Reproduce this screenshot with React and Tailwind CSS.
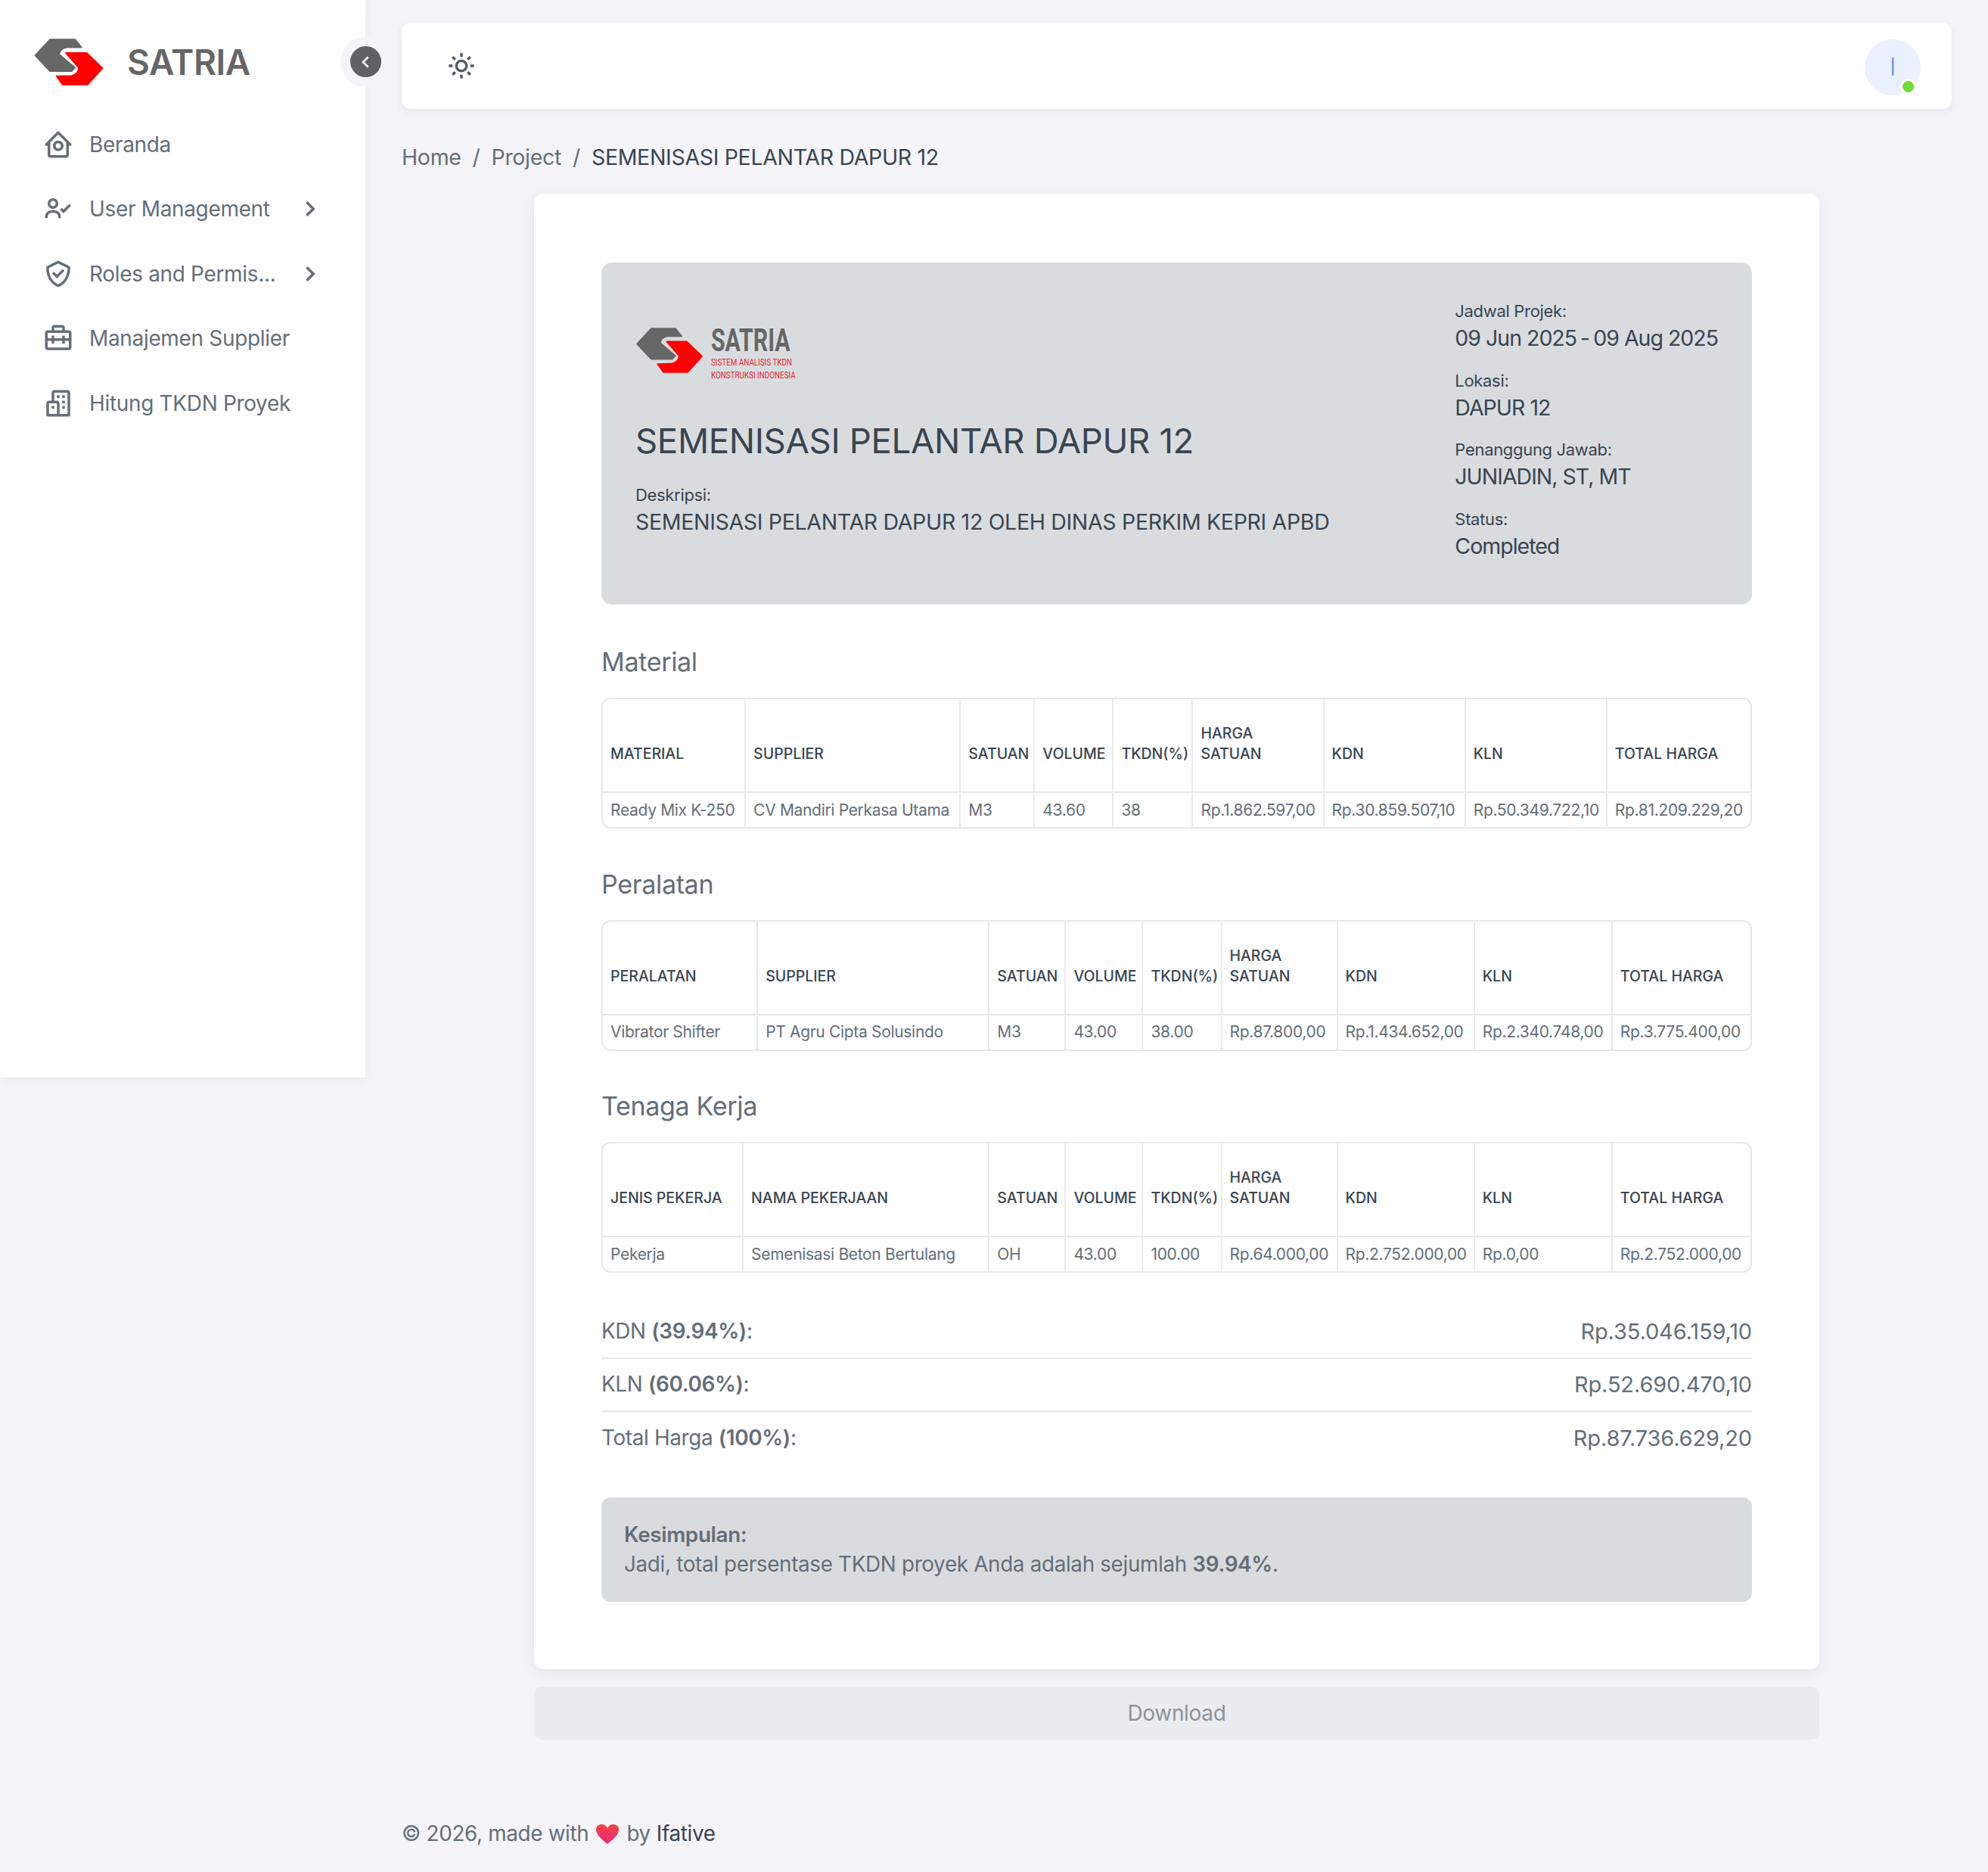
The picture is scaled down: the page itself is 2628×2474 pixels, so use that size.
import React from "react";
import {
  BiHomeCircle,
  BiUserCheck,
  BiCheckShield,
  BiBriefcaseAlt2,
  BiBuildings,
  BiChevronRight,
  BiChevronLeft,
  BiSun,
} from "react-icons/bi";

const NAV_ITEMS = [
  { label: "Beranda", icon: BiHomeCircle },
  { label: "User Management", icon: BiUserCheck, sub: true },
  { label: "Roles and Permis...", icon: BiCheckShield, sub: true },
  { label: "Manajemen Supplier", icon: BiBriefcaseAlt2 },
  { label: "Hitung TKDN Proyek", icon: BiBuildings },
];

const META = [
  { label: "Jadwal Projek:", value: <>09 Jun 2025<span className="mx-[5px]">-</span>09 Aug 2025</> },
  { label: "Lokasi:", value: "DAPUR 12" },
  { label: "Penanggung Jawab:", value: "JUNIADIN, ST, MT" },
  { label: "Status:", value: "Completed" },
];

const TABLES = [
  {
    title: "Material",
    widths: [188, 284, 98, 104, 105, 173, 187, 187, 190],
    first: "MATERIAL",
    second: "SUPPLIER",
    row: ["Ready Mix K-250", "CV Mandiri Perkasa Utama", "M3", "43.60", "38", "Rp.1.862.597,00", "Rp.30.859.507,10", "Rp.50.349.722,10", "Rp.81.209.229,20"],
  },
  {
    title: "Peralatan",
    widths: [204, 306, 101, 102, 104, 153, 181, 182, 183],
    first: "PERALATAN",
    second: "SUPPLIER",
    row: ["Vibrator Shifter", "PT Agru Cipta Solusindo", "M3", "43.00", "38.00", "Rp.87.800,00", "Rp.1.434.652,00", "Rp.2.340.748,00", "Rp.3.775.400,00"],
  },
  {
    title: "Tenaga Kerja",
    widths: [185, 325, 101, 102, 104, 153, 181, 182, 183],
    first: "JENIS PEKERJA",
    second: "NAMA PEKERJAAN",
    row: ["Pekerja", "Semenisasi Beton Bertulang", "OH", "43.00", "100.00", "Rp.64.000,00", "Rp.2.752.000,00", "Rp.0,00", "Rp.2.752.000,00"],
  },
];

const SUMMARY = [
  { label: "KDN", pct: "(39.94%)", value: "Rp.35.046.159,10" },
  { label: "KLN", pct: "(60.06%)", value: "Rp.52.690.470,10" },
  { label: "Total Harga", pct: "(100%)", value: "Rp.87.736.629,20" },
];

const LogoMark = ({ className }) => (
  <svg viewBox="130 147 285 196" className={className}>
    <path
      d="M136 218 L196 153 L298 153 L324 186 L262 186 Q236 192 234 214 L298 268 L284 282 L196 282 Z"
      fill="#666666"
      stroke="#666666"
      strokeWidth="5"
      strokeLinejoin="round"
    />
    <path
      d="M260 208 L345 208 L409 270 L349 337 L247 337 L222 302 L284 300 Q312 292 312 268 Z"
      fill="#ff0000"
      stroke="#ff0000"
      strokeWidth="5"
      strokeLinejoin="round"
    />
  </svg>
);

const DataTable = ({ table }) => {
  const heads = [table.first, table.second, "SATUAN", "VOLUME", "TKDN(%)", "HARGA SATUAN", "KDN", "KLN", "TOTAL HARGA"];
  return (
    <div className="rounded-[12px] border-2 border-[#e6e7e9] overflow-hidden">
      <table className="w-full table-fixed border-collapse">
        <colgroup>
          {table.widths.map((w, i) => (
            <col key={i} style={{ width: w }} />
          ))}
        </colgroup>
        <thead>
          <tr className="h-[123px] border-b-2 border-[#e6e7e9]">
            {heads.map((h, i) => (
              <th
                key={i}
                className="px-[10px] pb-[36px] text-left align-bottom text-[19.5px] leading-[27px] font-medium tracking-[0px] text-[#384551] border-l-2 first:border-l-0 border-[#e9eaec]"
              >
                {h}
              </th>
            ))}
          </tr>
        </thead>
        <tbody>
          <tr className="h-[46px]">
            {table.row.map((c, i) => (
              <td
                key={i}
                className="px-[10px] text-[21px] text-[#646e78] whitespace-nowrap border-l-2 first:border-l-0 border-[#e9eaec]"
              >
                {c}
              </td>
            ))}
          </tr>
        </tbody>
      </table>
    </div>
  );
};

export default function App() {
  return (
    <div className="flex min-h-screen bg-[#f4f4f9] tracking-[-0.02em] font-['Inter',sans-serif]">
      <aside className="relative w-[483px] h-[1424px] shrink-0 bg-white shadow-[0_2px_12px_rgba(56,69,81,0.08)]">
        <div className="flex items-center pt-[50px] pl-[44px] h-[113px]">
          <LogoMark className="w-[94px] h-[64px]" />
          <span className="ml-[30px] text-[46px] leading-none tracking-[-0.01em] font-semibold text-[#666666]">SATRIA</span>
        </div>

        <button className="absolute left-[450px] top-[48px] w-[67px] h-[67px] rounded-full bg-[#f4f4f9] flex items-center justify-center">
          <span className="w-[41px] h-[41px] rounded-full bg-[#5f6164] flex items-center justify-center">
            <BiChevronLeft className="w-[32px] h-[32px] text-white" />
          </span>
        </button>

        <nav className="mt-[35px] pl-[56px] pr-[53px]">
          {NAV_ITEMS.map((item) => {
            const Icon = item.icon;
            return (
              <div key={item.label} className="flex items-center h-[85.5px] text-[#646e78]">
                <Icon className="w-[42px] h-[42px] shrink-0" />
                <span className="ml-[20px] text-[28px] tracking-[-0.012em] whitespace-nowrap">{item.label}</span>
                {item.sub && <BiChevronRight className="ml-auto w-[42px] h-[42px]" />}
              </div>
            );
          })}
        </nav>
      </aside>

      <main className="flex-1 min-w-0 pt-[30px] px-[48px]">
        <header className="flex items-center justify-between h-[114px] pl-[59px] pr-[41px] bg-white rounded-[12px] shadow-[0_4px_12px_rgba(56,69,81,0.08)]">
          <BiSun className="w-[40px] h-[40px] text-[#4f5a64]" />
          <div className="relative mt-[3px] w-[74px] h-[74px] rounded-full bg-[#e8f1fd] flex items-center justify-center">
            <span className="text-[33px] font-light text-[#6f92e0]">I</span>
            <span className="absolute right-[6px] bottom-[1px] w-[21px] h-[21px] rounded-full bg-[#71dd37] border-[3px] border-white" />
          </div>
        </header>

        <div className="mt-[44px] flex items-center h-[40px] text-[28.5px] text-[#646e78]">
          <span>Home</span>
          <span className="mx-[15px]">/</span>
          <span>Project</span>
          <span className="mx-[15px]">/</span>
          <span className="text-[#384551]">SEMENISASI PELANTAR DAPUR 12</span>
        </div>

        <div className="mx-auto w-[1699px] mt-[28px]">
          <section className="bg-white rounded-[12px] px-[89px] pt-[91px] pb-[89px] shadow-[0_4px_16px_rgba(56,69,81,0.1)]">
            <div className="flex justify-between h-[452px] px-[45px] bg-[#d9dcdf] rounded-[14px]">
              <div className="pt-[84px]">
                <div className="flex h-[72px]">
                  <LogoMark className="w-[90px] h-[62px] mt-[1px]" />
                  <div className="ml-[10px] pt-[1px] w-[120px] font-['Roboto',sans-serif] tracking-normal">
                    <div className="origin-left scale-x-[0.72] text-[42px] leading-[36px] font-bold text-[#666666]">SATRIA</div>
                    <div className="mt-[3px] origin-left scale-x-[0.82] whitespace-nowrap text-[12px] leading-[17px] text-[#e8262e]">SISTEM ANALISIS TKDN</div>
                    <div className="origin-left scale-x-[0.82] whitespace-nowrap text-[12px] leading-[17px] text-[#e8262e]">KONSTRUKSI INDONESIA</div>
                  </div>
                </div>
                <h1 className="mt-[51px] text-[45.5px] leading-[58px] text-[#384551]">SEMENISASI PELANTAR DAPUR 12</h1>
                <div className="mt-[26px] text-[22px] leading-[32px] text-[#384551]">Deskripsi:</div>
                <div className="text-[28.5px] leading-[40px] text-[#384551]">SEMENISASI PELANTAR DAPUR 12 OLEH DINAS PERKIM KEPRI APBD</div>
              </div>
              <div className="pt-[48px] flex flex-col gap-[19.5px] text-[#384551]">
                {META.map((m) => (
                  <div key={m.label}>
                    <div className="text-[22px] leading-[32px]">{m.label}</div>
                    <div className="text-[28.5px] leading-[40px] tracking-[-0.035em]">{m.value}</div>
                  </div>
                ))}
              </div>
            </div>

            {TABLES.map((t, i) => (
              <div key={t.title} className={i === 0 ? "mt-[54px]" : "mt-[51.5px]"}>
                <h2 className="text-[34px] leading-[44px] text-[#646e78] mb-[25px]">{t.title}</h2>
                <DataTable table={t} />
              </div>
            ))}

            <div className="mt-[44px] text-[#646e78]">
              {SUMMARY.map((s, i) => (
                <div
                  key={s.label}
                  className={`flex items-center justify-between h-[70px] ${i < SUMMARY.length - 1 ? "border-b-2 border-[#e6e7e9]" : ""}`}
                >
                  <span className="text-[27.8px]">
                    {s.label} <b className="font-semibold">{s.pct}</b>:
                  </span>
                  <span className="text-[29px] tracking-[-0.005em]">{s.value}</span>
                </div>
              ))}
            </div>

            <div className="mt-[43px] h-[138px] px-[30px] py-[30px] bg-[#d9dcdf] rounded-[12px] text-[27.8px] leading-[39px] text-[#646e78]">
              <div className="font-semibold">Kesimpulan:</div>
              <div>
                Jadi, total persentase TKDN proyek Anda adalah sejumlah <b className="font-semibold">39.94%</b>.
              </div>
            </div>
          </section>

          <button className="mt-[23px] w-full h-[70px] rounded-[10px] bg-[#eaecef] text-[28px] text-[#8b939c]">Download</button>
        </div>

        <footer className="mt-[105px] flex items-center h-[40px] text-[27.8px] text-[#646e78]">
          <span>© 2026, made with</span>
          <svg viewBox="0 0 30 26" className="mx-[10px] w-[30px] h-[26px]">
            <defs>
              <linearGradient id="heart" x1="0" y1="0" x2="0" y2="1">
                <stop offset="0" stopColor="#f5473f" />
                <stop offset="1" stopColor="#f0247f" />
              </linearGradient>
            </defs>
            <path d="M15 26 C8 20 0 14 0 7 C0 2 4 0 7.5 0 C11 0 13.5 2 15 5 C16.5 2 19 0 22.5 0 C26 0 30 2 30 7 C30 14 22 20 15 26 Z" fill="url(#heart)" />
          </svg>
          <span>by</span>
          <span className="ml-[8px] text-[#384551]">Ifative</span>
        </footer>
      </main>
    </div>
  );
}
